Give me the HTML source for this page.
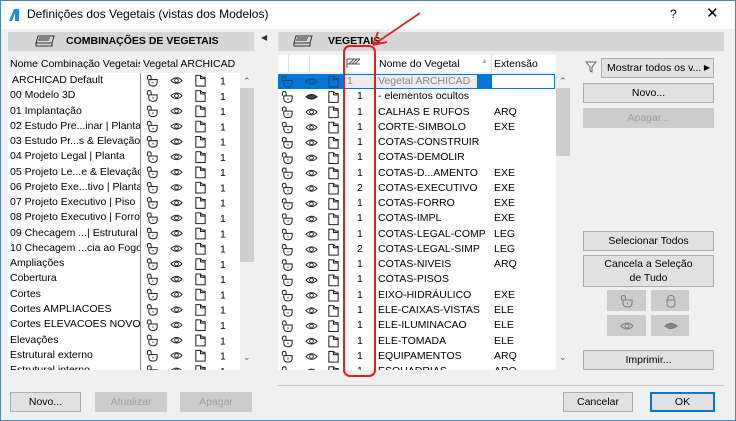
<!DOCTYPE html>
<html><head><meta charset="utf-8"><style>
*{margin:0;padding:0;box-sizing:border-box}
body{width:736px;height:421px;overflow:hidden;background:#f0f0f0;font-family:"Liberation Sans",sans-serif;font-size:10.5px;color:#000;position:relative}
.win{position:absolute;left:0;top:0;width:736px;height:421px;border:1px solid #4a86b8}
.title{position:absolute;left:1px;top:1px;width:734px;height:28px;background:#fff}
.abs{position:absolute}
.hdr{position:absolute;top:32px;height:19px;background:#d6d6d6;font-weight:bold;font-size:10.5px;line-height:19px}
.list{position:absolute;background:#fff;overflow:hidden}
.row{height:15.28px;line-height:15.28px;white-space:nowrap;position:relative}
.row span{position:absolute}
.nm{overflow:hidden;width:130px}
.btn{position:absolute;background:#e1e1e1;border:1px solid #adadad;text-align:center;font-size:10.5px;line-height:18px}
.dis{color:#a0a0a0;background:#cccccc;border-color:#cccccc}
svg{position:absolute}
</style></head><body>
<svg width="0" height="0" style="position:absolute">
<defs>
<symbol id="lk" viewBox="0 0 14 14"><path d="M1.5 6 V3.5 Q1.5 1.5 3.5 1.5 Q5.5 1.5 5.5 3.5 V6 M3 6 H12 V9 Q12 13 7.5 13 Q3 13 3 9 Z M7.5 8.5 V10" fill="none" stroke="#222" stroke-width="1.1"/></symbol>
<symbol id="ey" viewBox="0 0 14 14"><path d="M1 7 Q7 1 13 7 Q7 13 1 7 Z" fill="none" stroke="#222" stroke-width="1"/><circle cx="7" cy="7" r="2" fill="none" stroke="#222" stroke-width="1"/></symbol>
<symbol id="ef" viewBox="0 0 14 14"><path d="M1 7 Q7 2 13 7 Q7 12 1 7 Z" fill="#444" stroke="#222"/></symbol>
<symbol id="dc" viewBox="0 0 14 14"><path d="M2 1.5 H7 V5 H12 V13 H2 Z M7 1.5 L9 3.5 H12 V5" fill="none" stroke="#222" stroke-width="1.1"/></symbol>
</defs></svg>
<div class="win"></div>
<div class="title"></div>
<svg style="left:8px;top:8px" width="12" height="14"><path d="M1 13 L6 1 H11 V13 Z" fill="#1e90d8"/><path d="M4 13 L7 5 V13Z" fill="#fff"/></svg>
<div class="abs" style="left:27px;top:7px;font-size:12px">Definições dos Vegetais (vistas dos Modelos)</div>
<div class="abs" style="left:670px;top:7px;font-size:12px">?</div>
<div class="abs" style="left:706px;top:4px;font-size:15px">✕</div>

<!-- left -->
<div class="hdr" style="left:8px;width:246px"><svg style="left:26px;top:3px" width="22" height="13"><path d="M4 1 H20 L18 8 H2 Z M2 8 V11 H18 V8 M5 3 H16 M4 5 H15" fill="none" stroke="#333" stroke-width="1"/></svg><span style="position:absolute;left:58px">COMBINAÇÕES DE VEGETAIS</span></div>
<div class="abs" style="left:10px;top:58px;width:130px;overflow:hidden;white-space:nowrap">Nome Combinação Vegetais</div>
<div class="abs" style="left:143px;top:58px">Vegetal ARCHICAD</div>
<div class="list" style="left:8px;top:73px;width:232px;height:297px">
<div class="abs" style="left:132px;top:0;width:1px;height:297px;background:#888"></div>
<div>
<div class="row"><span class="nm" style="left:4px">ARCHICAD Default</span></div>
<div class="row"><span class="nm" style="left:2px">00 Modelo 3D</span></div>
<div class="row"><span class="nm" style="left:2px">01 Implantação</span></div>
<div class="row"><span class="nm" style="left:2px">02 Estudo Pre...inar | Planta</span></div>
<div class="row"><span class="nm" style="left:2px">03 Estudo Pr...s &amp; Elevação</span></div>
<div class="row"><span class="nm" style="left:2px">04 Projeto Legal | Planta</span></div>
<div class="row"><span class="nm" style="left:2px">05 Projeto Le...e &amp; Elevação</span></div>
<div class="row"><span class="nm" style="left:2px">06 Projeto Exe...tivo | Planta</span></div>
<div class="row"><span class="nm" style="left:2px">07 Projeto Executivo | Piso</span></div>
<div class="row"><span class="nm" style="left:2px">08 Projeto Executivo | Forro</span></div>
<div class="row"><span class="nm" style="left:2px">09 Checagem ...| Estrutural</span></div>
<div class="row"><span class="nm" style="left:2px">10 Checagem ...cia ao Fogo</span></div>
<div class="row"><span class="nm" style="left:2px">Ampliações</span></div>
<div class="row"><span class="nm" style="left:2px">Cobertura</span></div>
<div class="row"><span class="nm" style="left:2px">Cortes</span></div>
<div class="row"><span class="nm" style="left:2px">Cortes AMPLIACOES</span></div>
<div class="row"><span class="nm" style="left:2px">Cortes ELEVACOES NOVO</span></div>
<div class="row"><span class="nm" style="left:2px">Elevações</span></div>
<div class="row"><span class="nm" style="left:2px">Estrutural externo</span></div>
<div class="row"><span class="nm" style="left:2px">Estrutural interno</span></div>
</div>
<svg style="left:134px;top:0" width="98" height="300">
<g id="lrow">
<use href="#lk" x="4" y="1" width="13" height="13"/><use href="#ey" x="28" y="1" width="13" height="13"/><use href="#dc" x="52" y="1" width="13" height="13"/><text x="78" y="11.5" font-family="Liberation Sans" font-size="10.5">1</text>
</g>
<use href="#lrow" y="15.28"/><use href="#lrow" y="30.56"/><use href="#lrow" y="45.84"/><use href="#lrow" y="61.12"/><use href="#lrow" y="76.4"/><use href="#lrow" y="91.68"/><use href="#lrow" y="106.96"/><use href="#lrow" y="122.24"/><use href="#lrow" y="137.52"/><use href="#lrow" y="152.8"/><use href="#lrow" y="168.08"/><use href="#lrow" y="183.36"/><use href="#lrow" y="198.64"/><use href="#lrow" y="213.92"/><use href="#lrow" y="229.2"/><use href="#lrow" y="244.48"/><use href="#lrow" y="259.76"/><use href="#lrow" y="275.04"/><use href="#lrow" y="290.32"/>
</svg>
</div>
<div class="abs" style="left:240px;top:73px;width:14px;height:297px;background:#f0f0f0"></div>
<div class="abs" style="left:240px;top:88px;width:14px;height:174px;background:#cdcdcd"></div>
<div class="abs" style="left:243px;top:76px;font-size:9px;color:#555">⌃</div>
<div class="abs" style="left:243px;top:352px;font-size:9px;color:#555">⌄</div>
<div class="btn" style="left:10px;top:392px;width:71px;height:20px">Novo...</div>
<div class="btn dis" style="left:95px;top:392px;width:72px;height:20px">Atualizar</div>
<div class="btn dis" style="left:180px;top:392px;width:72px;height:20px">Apagar</div>

<div class="abs" style="left:261px;top:33px;font-size:8px;color:#333">◀</div>

<!-- right -->
<div class="hdr" style="left:278px;width:446px"><svg style="left:14px;top:3px" width="22" height="13"><path d="M4 1 H20 L18 8 H2 Z M2 8 V11 H18 V8 M5 3 H16 M4 5 H15" fill="none" stroke="#333" stroke-width="1"/></svg><span style="position:absolute;left:50px">VEGETAIS</span></div>
<div class="list" style="left:278px;top:55px;width:278px;height:17px">
<div class="abs" style="left:10px;top:0;width:1px;height:17px;background:#e0e0e0"></div>
<div class="abs" style="left:31px;top:0;width:1px;height:17px;background:#e0e0e0"></div>
<div class="abs" style="left:65px;top:0;width:1px;height:17px;background:#e0e0e0"></div>
<div class="abs" style="left:97px;top:0;width:1px;height:17px;background:#e0e0e0"></div>
<div class="abs" style="left:213px;top:0;width:1px;height:17px;background:#e0e0e0"></div>
<svg style="left:68px;top:3px" width="16" height="11"><path d="M1 1 H14 M1 1 V10 M3 6 L8 1 M6 6 L11 1 M9 6 L14 1 M1 6 H14" fill="none" stroke="#555" stroke-width="1"/></svg>
<div class="abs" style="left:101px;top:3px">Nome do Vegetal</div>
<div class="abs" style="left:203px;top:3px;font-size:7px;color:#aaa">▲</div>
<div class="abs" style="left:216px;top:3px">Extensão</div>
</div>
<div class="list" style="left:278px;top:74px;width:278px;height:296px">
<div class="abs" style="left:0;top:0;width:65px;height:15px;background:#0078d7"></div>
<div class="abs" style="left:65px;top:0;width:212px;height:15px;background:#ececec;border:1px solid #0078d7"></div>
<div class="abs" style="left:199px;top:1px;width:15px;height:13px;background:#0078d7"></div>
<div class="abs" style="left:214px;top:1px;width:62px;height:13px;background:#fff"></div>
<div style="padding-left:66px">
<div class="row" style="color:#888"><span style="left:3px">1</span><span style="left:34px">Vegetal ARCHICAD</span></div>
<div class="row"><span style="left:13px">1</span><span style="left:34px">- elementos ocultos</span></div>
<div class="row"><span style="left:13px">1</span><span style="left:34px">CALHAS E RUFOS</span><span style="left:150px">ARQ</span></div>
<div class="row"><span style="left:13px">1</span><span style="left:34px">CORTE-SIMBOLO</span><span style="left:150px">EXE</span></div>
<div class="row"><span style="left:13px">1</span><span style="left:34px">COTAS-CONSTRUIR</span></div>
<div class="row"><span style="left:13px">1</span><span style="left:34px">COTAS-DEMOLIR</span></div>
<div class="row"><span style="left:13px">1</span><span style="left:34px">COTAS-D...AMENTO</span><span style="left:150px">EXE</span></div>
<div class="row"><span style="left:13px">2</span><span style="left:34px">COTAS-EXECUTIVO</span><span style="left:150px">EXE</span></div>
<div class="row"><span style="left:13px">1</span><span style="left:34px">COTAS-FORRO</span><span style="left:150px">EXE</span></div>
<div class="row"><span style="left:13px">1</span><span style="left:34px">COTAS-IMPL</span><span style="left:150px">EXE</span></div>
<div class="row"><span style="left:13px">1</span><span style="left:34px">COTAS-LEGAL-COMP</span><span style="left:150px">LEG</span></div>
<div class="row"><span style="left:13px">2</span><span style="left:34px">COTAS-LEGAL-SIMP</span><span style="left:150px">LEG</span></div>
<div class="row"><span style="left:13px">1</span><span style="left:34px">COTAS-NIVEIS</span><span style="left:150px">ARQ</span></div>
<div class="row"><span style="left:13px">1</span><span style="left:34px">COTAS-PISOS</span></div>
<div class="row"><span style="left:13px">1</span><span style="left:34px">EIXO-HIDRÁULICO</span><span style="left:150px">EXE</span></div>
<div class="row"><span style="left:13px">1</span><span style="left:34px">ELE-CAIXAS-VISTAS</span><span style="left:150px">ELE</span></div>
<div class="row"><span style="left:13px">1</span><span style="left:34px">ELE-ILUMINACAO</span><span style="left:150px">ELE</span></div>
<div class="row"><span style="left:13px">1</span><span style="left:34px">ELE-TOMADA</span><span style="left:150px">ELE</span></div>
<div class="row"><span style="left:13px">1</span><span style="left:34px">EQUIPAMENTOS</span><span style="left:150px">ARQ</span></div>
<div class="row"><span style="left:13px">1</span><span style="left:34px">ESQUADRIAS</span><span style="left:150px">ARQ</span></div>
</div>
<svg style="left:0;top:0" width="66" height="300">
<g><use href="#lk" x="3" y="1" width="13" height="13" style="opacity:.5"/><use href="#ey" x="27" y="1" width="13" height="13" style="opacity:.5"/><use href="#dc" x="49" y="1" width="13" height="13" style="opacity:.6"/></g>
<g transform="translate(0,15.28)"><use href="#lk" x="3" y="1" width="13" height="13"/><use href="#ef" x="27" y="1" width="13" height="13"/><use href="#dc" x="49" y="1" width="13" height="13"/></g>
<g id="rrow" transform="translate(0,30.56)"><use href="#lk" x="3" y="1" width="13" height="13"/><use href="#ey" x="27" y="1" width="13" height="13"/><use href="#dc" x="49" y="1" width="13" height="13"/></g>
<use href="#rrow" y="15.28"/><use href="#rrow" y="30.56"/><use href="#rrow" y="45.84"/><use href="#rrow" y="61.12"/><use href="#rrow" y="76.4"/><use href="#rrow" y="91.68"/><use href="#rrow" y="106.96"/><use href="#rrow" y="122.24"/><use href="#rrow" y="137.52"/><use href="#rrow" y="152.8"/><use href="#rrow" y="168.08"/><use href="#rrow" y="183.36"/><use href="#rrow" y="198.64"/><use href="#rrow" y="213.92"/><use href="#rrow" y="229.2"/><use href="#rrow" y="244.48"/><use href="#rrow" y="259.76"/>
</svg>
</div>
<div class="abs" style="left:556px;top:73px;width:14px;height:297px;background:#f0f0f0"></div>
<div class="abs" style="left:556px;top:88px;width:14px;height:68px;background:#cdcdcd"></div>
<div class="abs" style="left:559px;top:76px;font-size:9px;color:#555">⌃</div>
<div class="abs" style="left:559px;top:352px;font-size:9px;color:#555">⌄</div>
<!-- red annotation -->
<div class="abs" style="left:343px;top:45px;width:33px;height:332px;border:2px solid #e02020;border-radius:7px"></div>
<svg style="left:360px;top:10px" width="70" height="45"><path d="M60 3 L13 35 M13 35 L27 32 M13 35 L18 22" fill="none" stroke="#e02020" stroke-width="1.8"/></svg>

<svg style="left:585px;top:60px" width="12" height="14"><path d="M1 2 H11 L7 7 V12 L5 11 V7 Z" fill="none" stroke="#666"/></svg>
<div class="btn" style="left:601px;top:58px;width:113px;height:20px;text-align:left;padding-left:5px">Mostrar todos os v... <span style="position:absolute;right:3px;font-size:8px">▶</span></div>
<div class="btn" style="left:583px;top:83px;width:131px;height:20px">Novo...</div>
<div class="btn dis" style="left:583px;top:108px;width:131px;height:20px">Apagar...</div>
<div class="btn" style="left:583px;top:231px;width:131px;height:20px">Selecionar Todos</div>
<div class="btn" style="left:583px;top:255px;width:131px;height:32px;line-height:14px;padding-top:1px">Cancela a Seleção<br>de Tudo</div>
<div class="btn dis" style="left:607px;top:290px;width:39px;height:21px"><svg style="left:12px;top:3px" width="14" height="14" opacity=".45"><use href="#lk" width="14" height="14"/></svg></div>
<div class="btn dis" style="left:651px;top:290px;width:38px;height:21px"><svg style="left:12px;top:3px" width="14" height="14" opacity=".45"><path d="M4 6 V4 Q4 1.5 7 1.5 Q10 1.5 10 4 V6 M3 6 H11 V10 Q11 13 7 13 Q3 13 3 10 Z" fill="none" stroke="#222"/></svg></div>
<div class="btn dis" style="left:607px;top:315px;width:39px;height:21px"><svg style="left:12px;top:3px" width="14" height="14" opacity=".45"><use href="#ey" width="14" height="14"/></svg></div>
<div class="btn dis" style="left:651px;top:315px;width:38px;height:21px"><svg style="left:11px;top:3px" width="16" height="14" opacity=".5"><use href="#ef" width="16" height="14"/></svg></div>
<div class="btn" style="left:583px;top:350px;width:131px;height:20px">Imprimir...</div>
<div class="abs" style="left:278px;top:385px;width:446px;height:1px;background:#c8c8c8"></div>
<div class="btn" style="left:563px;top:392px;width:70px;height:20px">Cancelar</div>
<div class="btn" style="left:650px;top:392px;width:65px;height:20px;border:1px solid #0078d7;box-shadow:inset 0 0 0 1px #0078d7">OK</div>
</body></html>
